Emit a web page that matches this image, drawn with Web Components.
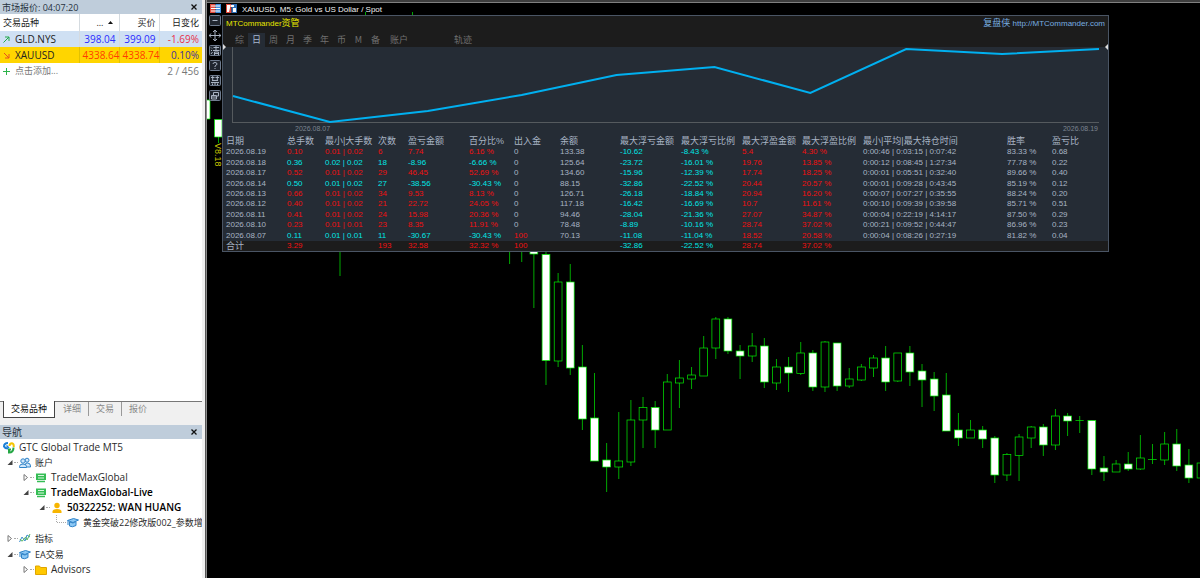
<!DOCTYPE html>
<html lang="zh-CN">
<head>
<meta charset="utf-8">
<title>XAUUSD, M5</title>
<style>
  html, body { margin: 0; height: 100%; }
  body { overflow: hidden; background: #000; color: #1c1c1c; font: 10px/15px "Open Sans", "Noto Sans CJK SC", sans-serif; }
</style>
</head>
<body>
<trading-desk>
  <market-watch slot="side"></market-watch>
  <nav-panel slot="side"></nav-panel>
  <price-chart slot="main">
    <tool-strip></tool-strip>
    <account-panel></account-panel>
  </price-chart>
</trading-desk>

<script>
const define = (name, html, setup) => customElements.define(name, class extends HTMLElement {
  constructor() {
    super();
    this.attachShadow({ mode: 'open' }).innerHTML = html;
  }
  connectedCallback() { if (setup) setup(this.shadowRoot, this); }
});

define('trading-desk', `
<style>
  :host { display: flex; height: 100vh; background: #000; }
  aside { flex: none; width: 202px; display: flex; flex-direction: column; overflow: hidden; background: #f0f0f0; border-right: 3px solid #f0f0f0; box-sizing: content-box; }
  main { flex: 1; min-width: 0; display: flex; border-left: 1px solid #555; box-shadow: inset 1px 0 #8c8c8c; padding-left: 1px; }
</style>
<aside><slot name="side"></slot></aside>
<main><slot name="main"></slot></main>`);

define('title-bar', `
<style>
  :host { display: flex; align-items: center; justify-content: space-between; height: 14px; padding: 0 4px 0 2px; background: #bfcddb; color: #26323e; }
  h2 { margin: 0; font: inherit; font-size: 10px; line-height: 14px; white-space: nowrap; }
  button { display: flex; align-items: center; border: 0; padding: 0; background: none; width: 8px; height: 8px; }
</style>
<h2><slot></slot></h2>
<button type="button" aria-label="关闭"><svg width="8" height="8" viewBox="0 0 8 8"><path d="M1.5 1.5l5 5M6.5 1.5l-5 5" stroke="#111" stroke-width="1.3"/></svg></button>`);

define('market-watch', `
<style>
  :host { display: flex; flex-direction: column; flex: 1; min-height: 0; }
  .body { flex: 1; background: #fff; border-bottom: 1px solid #777; }
  table { width: 100%; table-layout: fixed; border-collapse: collapse; }
  th, td { box-sizing: border-box; height: 16px; padding: 0 3px; font-weight: 400; line-height: 14px; text-align: right; white-space: nowrap; }
  thead th { height: 17px; font-size: 9px; }
  th:first-child, td:first-child { text-align: left; }
  th + th, td + td { border-left: 1px solid #d5dbe0; }
  .up td { background: #cfe0f3; color: #2b2bff; }
  .dn td { background: #ffd500; color: #ff3c00; }
  .dn td + td { border-color: #e3c100; }
  .up td:first-child, .dn td:first-child { color: #222; }
  .up td:last-child { color: #e8304a; }
  .dn td:last-child { color: #4030a0; }
  .add td { color: #777; border: 0; }
  .cell { display: flex; align-items: center; gap: 5px; }
  .cell svg { flex: none; }
  button { font: inherit; font-size: 9px; border: 0; padding: 0; background: none; color: inherit; }
  nav { display: flex; align-items: flex-start; height: 23px; padding-left: 3px; font-size: 9px; color: #8a8a8a; }
  nav button { height: 14px; line-height: 14px; padding: 0 7px; border-left: 1px solid #999; }
  nav button:nth-child(2) { border-color: transparent; }
  nav .on { background: #fff; color: #111; border: 1px solid #444; border-top: 0; margin-top: -1px; height: 17px; }
  .t { font-size: 9px; }
</style>
<title-bar><span class="t">市场报价: 04:07:20</span></title-bar>
<div class="body">
<table>
  <colgroup><col style="width:79px"><col style="width:40px"><col style="width:40px"><col></colgroup>
  <thead><tr><th>交易品种</th><th>... &nbsp;<svg width="5" height="5" viewBox="0 0 5 5"><path d="M0 3L2.500 0L5 3z" fill="#111"/></svg>&nbsp;</th><th>买价</th><th>日变化</th></tr></thead>
  <tbody>
    <tr class="up"><td><span class="cell"><svg width="7" height="7" viewBox="0 0 7 7"><path d="M.5 6.500L6 1M2 1H6V5" fill="none" stroke="#22a84a"/></svg>GLD.NYS</span></td><td>398.04</td><td>399.09</td><td>-1.69%</td></tr>
    <tr class="dn"><td><span class="cell"><svg width="7" height="7" viewBox="0 0 7 7"><path d="M1 1L6 6M6 2V6H2" fill="none" stroke="#e8501c"/></svg>XAUUSD</span></td><td>4338.64</td><td>4338.74</td><td>0.10%</td></tr>
    <tr class="add"><td colspan="2"><span class="cell"><svg width="7" height="7" viewBox="0 0 7 7"><path d="M0 3.500H7M3.500 0V7" stroke="#2cb34a"/></svg><button type="button">点击添加...</button></span></td><td colspan="2">2 / 456</td></tr>
  </tbody>
</table>
</div>
<nav><button type="button" class="on">交易品种</button><button type="button">详细</button><button type="button">交易</button><button type="button">报价</button></nav>`);

const ICONS = {
  logo: '<path d="M5 1Q1 1 1 4.500Q2 6.500 5 6.500" fill="none" stroke="#1b7fd6" stroke-width="2"/><path d="M3.500 3.500L6 6" stroke="#1b7fd6" stroke-width="1.500"/><path d="M6.500 4Q6.500 1.200 9 1.200Q11 1.500 10.700 5" fill="none" stroke="#f5c400" stroke-width="2"/><path d="M10.500 5.500Q10.500 10.500 6 10.500V7.500H8" fill="none" stroke="#25a745" stroke-width="2"/>',
  users: '<g fill="#cfe6fa" stroke="#2f83c8"><circle cx="8" cy="3.200" r="2"/><path d="M6 10V8Q6 6 8.500 6Q11.500 6 11.500 9V10z"/><circle cx="4" cy="4" r="2.200"/><path d="M.5 10.500V9.500Q.5 7 4 7Q7.500 7 7.500 9.500V10.500z"/></g>',
  server: '<path d="M1 1.500H11V8H1z" fill="#35bd55"/><path d="M3 3.500H9M3 6H9" stroke="#d8f7df"/><path d="M2 9.500H10" stroke="#35bd55" stroke-width="1.500"/>',
  user: '<circle cx="6" cy="3.500" r="2.700" fill="#f7b500"/><path d="M1.500 11V9.500Q1.500 7 6 7Q10.500 7 10.500 9.500V11z" fill="#f7b500"/>',
  cap: '<path d="M.5 3.500L6.500 1.500L11.500 3L6 5.500z" fill="#8cc8f5" stroke="#2f83c8"/><path d="M2.500 5V9Q5 10.800 9 8.500V4.500L6 6z" fill="#8cc8f5" stroke="#2f83c8"/><path d="M1 4V8" stroke="#2f83c8"/>',
  wave: '<path d="M.5 9L3 4L6 8L8 2L11 4" fill="none" stroke="#3f8fd0"/><path d="M1 6Q3 10 5 6T8 7L11 1" fill="none" stroke="#54b35c"/>',
  folder: '<path d="M.5 2H4.500L5.500 3.500H11.500V10.500H.5z" fill="#ffc800" stroke="#e0a500"/>'
};
define('tree-item', `
<style>
  :host { display: block; font-size: 10px; font-weight: 400; }
  :host([cjk]) .label { font-size: 9px; }
  .row { display: flex; align-items: center; height: 15px; white-space: nowrap; color: #2a2a2a; }
  .row.bold { font-weight: 600; color: #000; }
  .twist, .leaf { flex: none; width: 6px; height: 15px; }
  .leaf { width: 12px; }
  .dash { flex: none; width: 4px; margin: 0 1px; border-top: 1px dotted #aaa; }
  .icon { flex: none; margin-right: 4px; }
  .kids { display: block; margin-left: 16px; }
</style>
<div class="row"><span class="lead"></span><svg class="icon" width="12" height="12" viewBox="0 0 12 12"></svg><span class="label"><slot></slot></span></div>
<slot class="kids" name="kids"></slot>`, (root, host) => {
  const state = host.getAttribute('state');
  if (host.hasAttribute('bold')) root.querySelector('.row').classList.add('bold');
  root.querySelector('.icon').innerHTML = ICONS[host.getAttribute('icon')];
  const open = '<path d="M5.500 5V10H.5z" fill="#444"/>';
  const shut = '<path d="M1 4.500L4.500 7.500L1 10.500z" fill="#fff" stroke="#777"/>';
  const lead = root.querySelector('.lead');
  if (state === 'leaf') lead.outerHTML = '<svg class="leaf" viewBox="0 0 12 15"><path d="M1.500 0V7.500H11" fill="none" stroke="#aaa" stroke-dasharray="1 1"/></svg>';
  else if (state) lead.outerHTML = '<svg class="twist" viewBox="0 0 6 15">' + (state === 'open' ? open : shut) + '</svg><span class="dash"></span>';
});

define('nav-panel', `
<style>
  :host { display: flex; flex-direction: column; flex: none; height: 153px; overflow: hidden; }
  .tree { flex: 1; background: #fff; padding-top: 1px; overflow: hidden; }
  .root { padding-left: 3px; }
  .list { display: flex; flex-direction: column; gap: 1px; padding-left: 7px; }
</style>
<title-bar>导航</title-bar>
<div class="tree" role="tree">
  <tree-item class="root" icon="logo">GTC Global Trade MT5</tree-item>
  <div class="list">
    <tree-item icon="users" state="open" cjk>账户
      <tree-item slot="kids" icon="server" state="shut">TradeMaxGlobal</tree-item>
      <tree-item slot="kids" icon="server" state="open" bold>TradeMaxGlobal-Live
        <tree-item slot="kids" icon="user" state="open" bold>50322252: WAN HUANG
          <tree-item slot="kids" icon="cap" state="leaf" cjk>黄金突破22修改版002_参数增</tree-item>
        </tree-item>
      </tree-item>
    </tree-item>
    <tree-item icon="wave" state="shut" cjk>指标</tree-item>
    <tree-item icon="cap" state="open" cjk>EA交易
      <tree-item slot="kids" icon="folder" state="shut">Advisors</tree-item>
    </tree-item>
  </div>
</div>`);

/* [high, low, body top, body bottom, filled] on an even time grid */
const CANDLES = [
  [240,264,240,250,0],[240,262,240,250,0],[252,308,250,254,1],[252,385,254.5,360.5,1],[273,367,282,361,0],[264,375,282,368,1],
  [345,430,367,419,1],[373,461,418,461,1],[443,492,460,467,1],[412,479,461,467,0],[400,466,420,462,0],[397,448,407.5,420,0],
  [401,448,407.5,430,1],[374,430,382,430,0],[360,408,378,383,0],[367,389,375,379,0],[336,376,348,376,0],[317,359,319,348,0],
  [317,354,319,351,1],[345,379,351,356,1],[333,362,346,356,0],[338,388,346,382,1],[359,390,367,383,0],[357,392,367,373,1],
  [342,375,353,373.5,0],[350,391,353,387,1],[341,392,342,387,0],[343,391,343,386,1],[368,388,379,386,0],[364,381,367,380,0],
  [355,377,358,368,0],[346,391,358,382,1],[353,382,353,381,0],[346,386,353,372,1],[364,407,371,380,1],[372,411,379,396,1],
  [373,431,395,431,1],[413,446,430,438,1],[420,438,430,438,0],[426,448,430,439,1],[436,483,438,475,1],[453,481,454.5,475,0],
  [434,481,437,455.5,0],[426,448,427,438,0],[424,456,427,445,1],[409,450,416,445,0],[413,436,416,421,1],[416,433,420.4,420.6,0],
  [420,475,420.5,469,1],[456,481,468,472,1],[460,472,464,472,0],[452,471,464,469,1],[435,470,458,469,0],[444,464,459.4,459.6,0],
  [432,465,444,460,0],[429,471,444,466,1],[449,483,465,478,1],[463,478,463,478,0]
];

define('price-chart', `
<style>
  :host { position: relative; display: block; flex: 1; min-width: 0; background: #000; overflow: hidden; border-top: 2px solid #3e3e3e; box-shadow: inset 0 1px #808080; color: #ddd; }
  .candles { position: absolute; inset: 0; width: 100%; height: 100%; }
  .top { position: relative; display: flex; align-items: center; gap: 5px; height: 13px; padding-left: 3px; font: 8px/13px "Liberation Sans", sans-serif; white-space: nowrap; color: #f0f0f0; }
  .top svg { flex: none; }
  .top span { padding-top: 2px; }
  .over { position: relative; display: flex; align-items: flex-start; padding: 0 91px 0 2px; }
  .ver { position: absolute; left: 6px; top: 141px; writing-mode: vertical-rl; font: 9px/10px "Liberation Sans", sans-serif; color: #c8c800; }
</style>
<svg class="candles" aria-hidden="true"><g transform="translate(-207 -2)" stroke="#00f000" stroke-width="0.7" fill="none"></g></svg>
<div class="top">
  <svg width="11" height="9" viewBox="0 0 11 9"><path d="M0 0H5.500V9H0z" fill="#e24a3c"/><path d="M5.500 0H11V9H5.500z" fill="#3f8fe0"/><path d="M1 2H10M1 4.500H10M1 7H10" stroke="#fff"/></svg>
  <svg width="11" height="9" viewBox="0 0 11 9"><path d="M0 0H5.500V9H0z" fill="#e24a3c"/><path d="M5.500 0H11V9H5.500z" fill="#2f6fb8"/><path d="M1 1H4V4L3 8H1zM7 4H10V8H7zM4.500 1H8V3H4.500z" fill="#fff"/></svg>
  <span>XAUUSD, M5: Gold vs US Dollar / Spot</span>
</div>
<div class="over"><slot></slot></div>
<span class="ver">V8.18</span>`, root => {
  const g = root.querySelector('g');
  let s = '<path d="M340 240V276M365.500 12V15M412.500 12V15M218.500 136V143"/><path d="M200 100H210V119H200zM214.500 119.500H222V137H214.500z" fill="#fff"/>';
  CANDLES.forEach(([hi, lo, top, bot, fill], i) => {
    const x = 509.6 + 12.13 * i;
    s += `<path d="M${x} ${hi}V${top}M${x} ${bot}V${lo}"/><rect x="${x - 3.9}" y="${top}" width="7.8" height="${bot - top}"${fill ? ' fill="#fff"' : ''}/>`;
  });
  g.innerHTML = s;
});

define('tool-strip', `
<style>
  :host { display: flex; flex-direction: column; gap: 4px; flex: none; width: 13px; }
  button { width: 12px; height: 11px; padding: 0; border: 0; background: none; display: block; }
  svg { display: block; }
  path { fill: none; stroke: #a9b3c2; }
  rect { fill: #20262f; stroke: #6f7c8f; }
</style>
<button type="button" aria-label="最小化"><svg width="12" height="11"><rect x=".5" y=".5" width="11" height="10" rx="1"/><path d="M3.500 5.500H8.500"/></svg></button>
<button type="button" aria-label="移动"><svg width="12" height="11"><path d="M0 5.500H12M6 0V11M4 2L6 .2L8 2M4 9L6 10.800L8 9M2 3.500L.3 5.500L2 7.500M10 3.500L11.700 5.500L10 7.500"/></svg></button>
<button type="button" aria-label="清"><svg width="12" height="11"><rect x=".5" y=".5" width="11" height="10" rx="1"/><path d="M2 2.500L3 3.500M2 5L3 6M2 9L3.500 7M4.500 2.500H10M7 1V5.500M4 5.500H10.500M5.500 10V7H9.500V10M5.500 8.500H9"/></svg></button>
<button type="button" aria-label="帮助"><svg width="12" height="11"><rect x=".5" y=".5" width="11" height="10" rx="1"/><path d="M4 4Q4 2.500 6 2.500T8 4Q8 5 6 6V7M6 8V9"/></svg></button>
<button type="button" aria-label="禁"><svg width="12" height="11"><rect x=".5" y=".5" width="11" height="10" rx="1"/><path d="M2 2.500H5.500M6.500 2.500H10M3.700 1V5M8.300 1V5M3 5.500H9M2 7.500H10M6 7.500V10M3.500 8.500V10M8.500 8.500V10"/></svg></button>
<button type="button" aria-label="窗口"><svg width="12" height="11"><rect x=".5" y=".5" width="11" height="10" rx="1"/><path d="M4.500 5V2.500H9.500V6H8M2.500 5.500H7.500V9H2.500zM2.500 7H7.500"/></svg></button>`);

const HEAD = ['日期','总手数','最小|大手数','次数','盈亏金额','百分比%','出入金','余额','最大浮亏金额','最大浮亏比例','最大浮盈金额','最大浮盈比例','最小|平均|最大持仓时间','胜率','盈亏比'];
const WIDTHS = [64,38,53,30,61,45,46,60,61,61,60,61,144,45];
const ROWS = [
  ['2026.08.19','0.10','0.01 | 0.02','6','7.74','6.16 %','0','133.38','-10.62','-8.43 %','5.4','4.30 %','0:00:46 | 0:03:15 | 0:07:42','83.33 %','0.68'],
  ['2026.08.18','0.36','0.02 | 0.02','18','-8.96','-6.66 %','0','125.64','-23.72','-16.01 %','19.76','13.85 %','0:00:12 | 0:08:45 | 1:27:34','77.78 %','0.22'],
  ['2026.08.17','0.52','0.01 | 0.02','29','46.45','52.69 %','0','134.60','-15.96','-12.39 %','17.74','18.25 %','0:00:01 | 0:05:51 | 0:32:40','89.66 %','0.40'],
  ['2026.08.14','0.50','0.01 | 0.02','27','-38.56','-30.43 %','0','88.15','-32.86','-22.52 %','20.44','20.57 %','0:00:01 | 0:09:28 | 0:43:45','85.19 %','0.12'],
  ['2026.08.13','0.66','0.01 | 0.02','34','9.53','8.13 %','0','126.71','-26.18','-18.84 %','20.94','16.20 %','0:00:07 | 0:07:27 | 0:35:55','88.24 %','0.20'],
  ['2026.08.12','0.40','0.01 | 0.02','21','22.72','24.05 %','0','117.18','-16.42','-16.69 %','10.7','11.61 %','0:00:10 | 0:09:39 | 0:39:58','85.71 %','0.51'],
  ['2026.08.11','0.41','0.01 | 0.02','24','15.98','20.36 %','0','94.46','-28.04','-21.36 %','27.07','34.87 %','0:00:04 | 0:22:19 | 4:14:17','87.50 %','0.29'],
  ['2026.08.10','0.23','0.01 | 0.01','23','8.35','11.91 %','0','78.48','-8.89','-10.16 %','28.74','37.02 %','0:00:21 | 0:09:52 | 0:44:47','86.96 %','0.23'],
  ['2026.08.07','0.11','0.01 | 0.01','11','-30.67','-30.43 %','100','70.13','-11.08','-11.04 %','18.52','20.58 %','0:00:04 | 0:08:26 | 0:27:19','81.82 %','0.04']
];
const TOTAL = ['合计','3.29','','193','32.58','32.32 %','100','','-32.86','-22.52 %','28.74','37.02 %','','',''];

define('account-panel', `
<style>
  :host { display: block; flex: 1; min-width: 0; box-sizing: border-box; border: 1px solid #4a5564; background: #252c35; color: #a8b4c4; font: 9px/11px "Liberation Sans", "Noto Sans CJK SC", sans-serif; overflow: hidden; position: relative; }
  header { background: #1c1c1c; height: 31px; display: flex; flex-direction: column; }
  .title { display: flex; justify-content: space-between; padding: 0 3px; height: 15px; line-height: 14px; font-size: 8px; }
  .title h1 { margin: 0; font: inherit; color: #e6e600; }
  .title span { font-size: 9px; }
  a { color: #78aee0; text-decoration: none; }
  nav { display: flex; padding: 2px 0 0 8px; }
  nav button { width: 17px; height: 14px; padding: 0; border: 0; background: none; color: #707070; font: 9px/14px "Noto Sans CJK SC", sans-serif; text-align: center; }
  nav button.wide { width: 30px; white-space: nowrap; }
  nav button.far { margin-left: 34px; }
  nav button.on { background: #252c35; color: #a8b8d0; }
  .plot { margin: 0 9px; height: 75px; border: 1px solid #555a5e; border-width: 0 0 1px 1px; }
  .plot svg { display: block; width: 100%; height: 75px; overflow: visible; }
  polyline { fill: none; stroke: #00b0f0; stroke-width: 2; vector-effect: non-scaling-stroke; }
  .dates { display: flex; justify-content: space-between; padding: 0 10px 0 72px; height: 12px; line-height: 11px; font-size: 7px; color: #7c8591; }
  table { width: 100%; height: 116px; table-layout: fixed; border-collapse: collapse; }
  th, td { padding: 0; font-weight: 400; text-align: left; white-space: nowrap; }
  tr > :first-child { padding-left: 3px; }
  thead th { height: 12px; font-size: 9px; line-height: 12px; }
  tbody td, tbody th { font-size: 8px; line-height: 10px; }
  tfoot td, tfoot th { height: 10px; font-size: 8px; line-height: 10px; background: #1c1c1c; }
  tfoot th { font-size: 9px; }
  .r { color: #f01010; } .c { color: #00e6e6; }
  .mark { position: absolute; top: 28px; width: 4px; height: 6px; }
  .mark.l { left: 0; } .mark.rt { right: 0; }
</style>
<header>
  <div class="title"><h1>MTCommander<span>资管</span></h1><a href="http://MTCommander.com"><span>复盘侠</span> http://MTCommander.com</a></div>
  <nav></nav>
</header>
<div class="plot"><svg viewBox="0 0 867 75" preserveAspectRatio="none" aria-hidden="true"><polyline points="0,49 97,75 195,64 289,48 384,28 482,20 578,46 674,2 770,7 867,2"/></svg></div>
<div class="dates"><span>2026.08.07</span><span>2026.08.19</span></div>
<table><colgroup></colgroup><thead></thead><tbody></tbody><tfoot></tfoot></table>
<svg class="mark l" viewBox="0 0 4 6"><path d="M0 0L3 3L0 6z" fill="#ddd"/></svg>
<svg class="mark rt" viewBox="0 0 4 6"><path d="M4 0L1 3L4 6z" fill="#ddd"/></svg>`, root => {
  const labels = ['综','日','周','月','季','年','币','M','备','账户','轨迹'];
  root.querySelector('nav').innerHTML = labels.map(t =>
    `<button type="button" class="${t === '日' ? 'on' : ''}${t.length > 1 ? 'wide' : ''}${t === '轨迹' ? ' far' : ''}">${t}</button>`).join('');
  root.querySelector('colgroup').innerHTML = WIDTHS.map(w => `<col style="width:${w}px">`).join('') + '<col>';
  root.querySelector('thead').innerHTML = '<tr>' + HEAD.map(t => `<th scope="col">${t}</th>`).join('') + '</tr>';
  const line = r => {
    const loss = r[4][0] === '-';
    return '<tr>' + r.map((t, i) => {
      if (!i) return `<th scope="row">${t}</th>`;
      let cls = '';
      if (i <= 5) cls = loss ? 'c' : 'r';
      else if (i === 6 && t === '100') cls = 'r';
      else if (i === 8 || i === 9) cls = 'c';
      else if (i === 10 || i === 11) cls = 'r';
      return `<td class="${cls}">${t}</td>`;
    }).join('') + '</tr>';
  };
  root.querySelector('tbody').innerHTML = ROWS.map(line).join('');
  root.querySelector('tfoot').innerHTML = line(TOTAL);
});
</script>
</body>
</html>
